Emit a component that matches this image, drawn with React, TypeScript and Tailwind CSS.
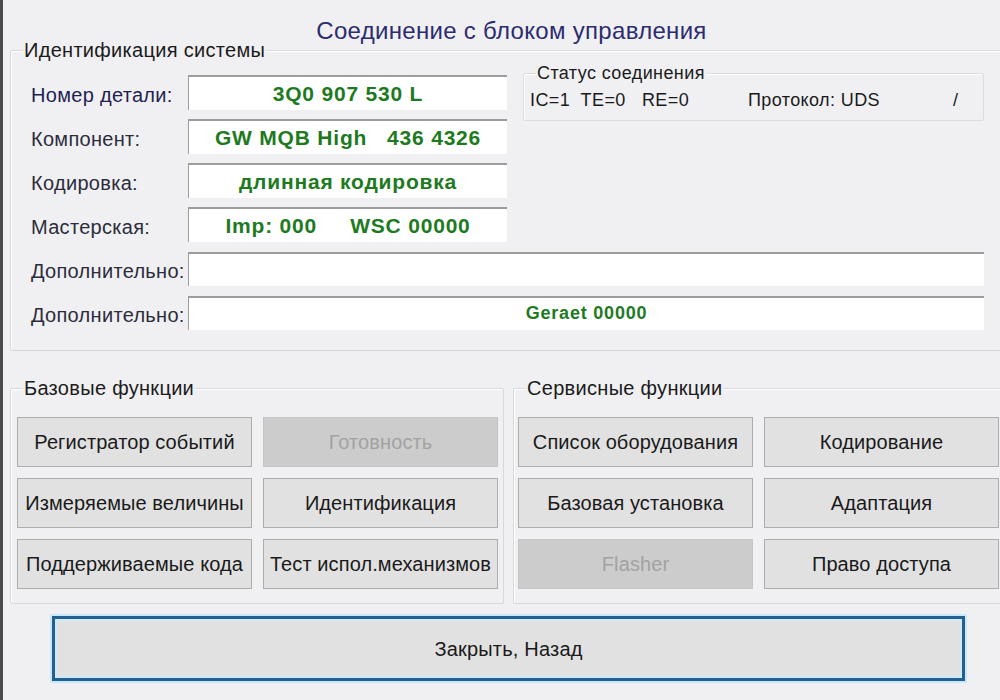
import type { ReactNode } from 'react';

const FONT = { fontFamily: '"Liberation Sans", Arial, sans-serif' };

type Btn = { label: string; disabled?: boolean };

const baseFunctions: Btn[] = [
  { label: 'Регистратор событий' },
  { label: 'Готовность', disabled: true },
  { label: 'Измеряемые величины' },
  { label: 'Идентификация' },
  { label: 'Поддерживаемые кода' },
  { label: 'Тест испол.механизмов' },
];

const serviceFunctions: Btn[] = [
  { label: 'Список оборудования' },
  { label: 'Кодирование' },
  { label: 'Базовая установка' },
  { label: 'Адаптация' },
  { label: 'Flasher', disabled: true },
  { label: 'Право доступа' },
];

function GroupBox({ title, className, titleClass, children }: { title: string; className: string; titleClass?: string; children: ReactNode }) {
  return (
    <div className={`relative shrink-0 border border-[#d9d9dc] rounded-[2px] shadow-[inset_1px_1px_0_#ffffff] ${className}`}>
      <span className={`absolute left-[12px] -top-[12px] bg-[#f0f0f2] px-[1px] leading-[22px] text-[#1b1b1b] ${titleClass ?? 'text-[20px] tracking-[0.3px]'}`}>
        {title}
      </span>
      {children}
    </div>
  );
}

function Field({ value, className, textClass }: { value?: string; className: string; textClass?: string }) {
  return (
    <div
      className={`flex items-center justify-center bg-white border-t-2 border-l border-[#9c9c9c] font-bold text-[#1e7a1e] ${textClass ?? 'text-[21px] tracking-[0.8px]'} ${className}`}
    >
      {value}
    </div>
  );
}

function Row({ label, labelClass, children }: { label: string; labelClass?: string; children: ReactNode }) {
  return (
    <div className="flex items-center h-[35px]">
      <div className={`w-[177px] pl-[20px] pt-[5px] text-[20px] tracking-[0.3px] whitespace-nowrap ${labelClass ?? 'text-[#2c2c3c]'}`}>{label}</div>
      {children}
    </div>
  );
}

function FuncButton({ label, disabled }: Btn) {
  return (
    <button
      disabled={disabled}
      className={`h-[50px] w-[235px] border text-[20px] tracking-[0.1px] whitespace-nowrap ${
        disabled
          ? 'bg-[#cccccc] border-[#c4c4c4] text-[#a2a2a2]'
          : 'bg-[#e1e1e1] border-[#adadad] text-[#1a1a1a]'
      }`}
    >
      {label}
    </button>
  );
}

export default function App() {
  return (
    <div style={FONT} className="w-[1000px] h-[700px] overflow-hidden bg-[#f0f0f2] border-l-[3px] border-[#4a4a4e]">
      <div className="h-[50px] pt-[17px] pl-[20px] text-center text-[24px] tracking-[0.3px] leading-[28px] text-[#2c2c70]">
        Соединение с блоком управления
      </div>

      <GroupBox title="Идентификация системы" className="ml-[7px] w-[1010px] h-[301px] pt-[24px]">
        <div className="flex">
          <div className="flex flex-col gap-[9px]">
            <Row label="Номер детали:" labelClass="text-[#1f1f52]">
              <Field value="3Q0 907 530 L" className="w-[319px] h-[35px]" />
            </Row>
            <Row label="Компонент:">
              <Field value="GW MQB High   436 4326" className="w-[319px] h-[35px] whitespace-pre" />
            </Row>
            <Row label="Кодировка:">
              <Field value="длинная кодировка" className="w-[319px] h-[35px]" />
            </Row>
            <Row label="Мастерская:">
              <Field value="Imp: 000     WSC 00000" className="w-[319px] h-[35px] whitespace-pre" />
            </Row>
          </div>

          <GroupBox title="Статус соединения" titleClass="text-[18px] tracking-[0.4px]" className="ml-[16px] mt-[-2px] w-[461px] h-[48px] border-[#dcdcdf]">
            <div className="flex items-center h-full pt-[6px] pl-[6px] text-[18px] tracking-[0.4px] text-[#1a1a1a] whitespace-pre">
              <span className="w-[218px]">IC=1  TE=0   RE=0</span>
              <span className="w-[205px]">Протокол: UDS</span>
              <span>/</span>
            </div>
          </GroupBox>
        </div>

        <div className="flex flex-col gap-[9px] mt-[9px]">
          <Row label="Дополнительно:">
            <Field className="w-[796px] h-[34px]" />
          </Row>
          <Row label="Дополнительно:">
            <Field value="Geraet 00000" textClass="text-[18px] tracking-[0.8px]" className="w-[796px] h-[34px]" />
          </Row>
        </div>
      </GroupBox>

      <div className="flex mt-[37px] ml-[7px] gap-[9px]">
        <GroupBox title="Базовые функции" className="w-[494px] h-[216px] pt-[28px] pl-[6px]">
          <div className="grid grid-cols-[235px_235px] gap-x-[11px] gap-y-[11px]">
            {baseFunctions.map((b) => (
              <FuncButton key={b.label} {...b} />
            ))}
          </div>
        </GroupBox>
        <GroupBox title="Сервисные функции" className="w-[500px] h-[216px] pt-[28px] pl-[4px]">
          <div className="grid grid-cols-[235px_235px] gap-x-[11px] gap-y-[11px]">
            {serviceFunctions.map((b) => (
              <FuncButton key={b.label} {...b} />
            ))}
          </div>
        </GroupBox>
      </div>

      <div className="pl-[49px] pt-[12px]">
        <button className="w-[913px] h-[65px] bg-[#e1e1e1] border-[3px] border-[#235f91] shadow-[0_0_0_2px_#c8e9fb,inset_0_0_0_2px_#cfeafa] text-[20px] tracking-[0.2px] text-[#1a1a1a]">
          Закрыть, Назад
        </button>
      </div>
    </div>
  );
}
